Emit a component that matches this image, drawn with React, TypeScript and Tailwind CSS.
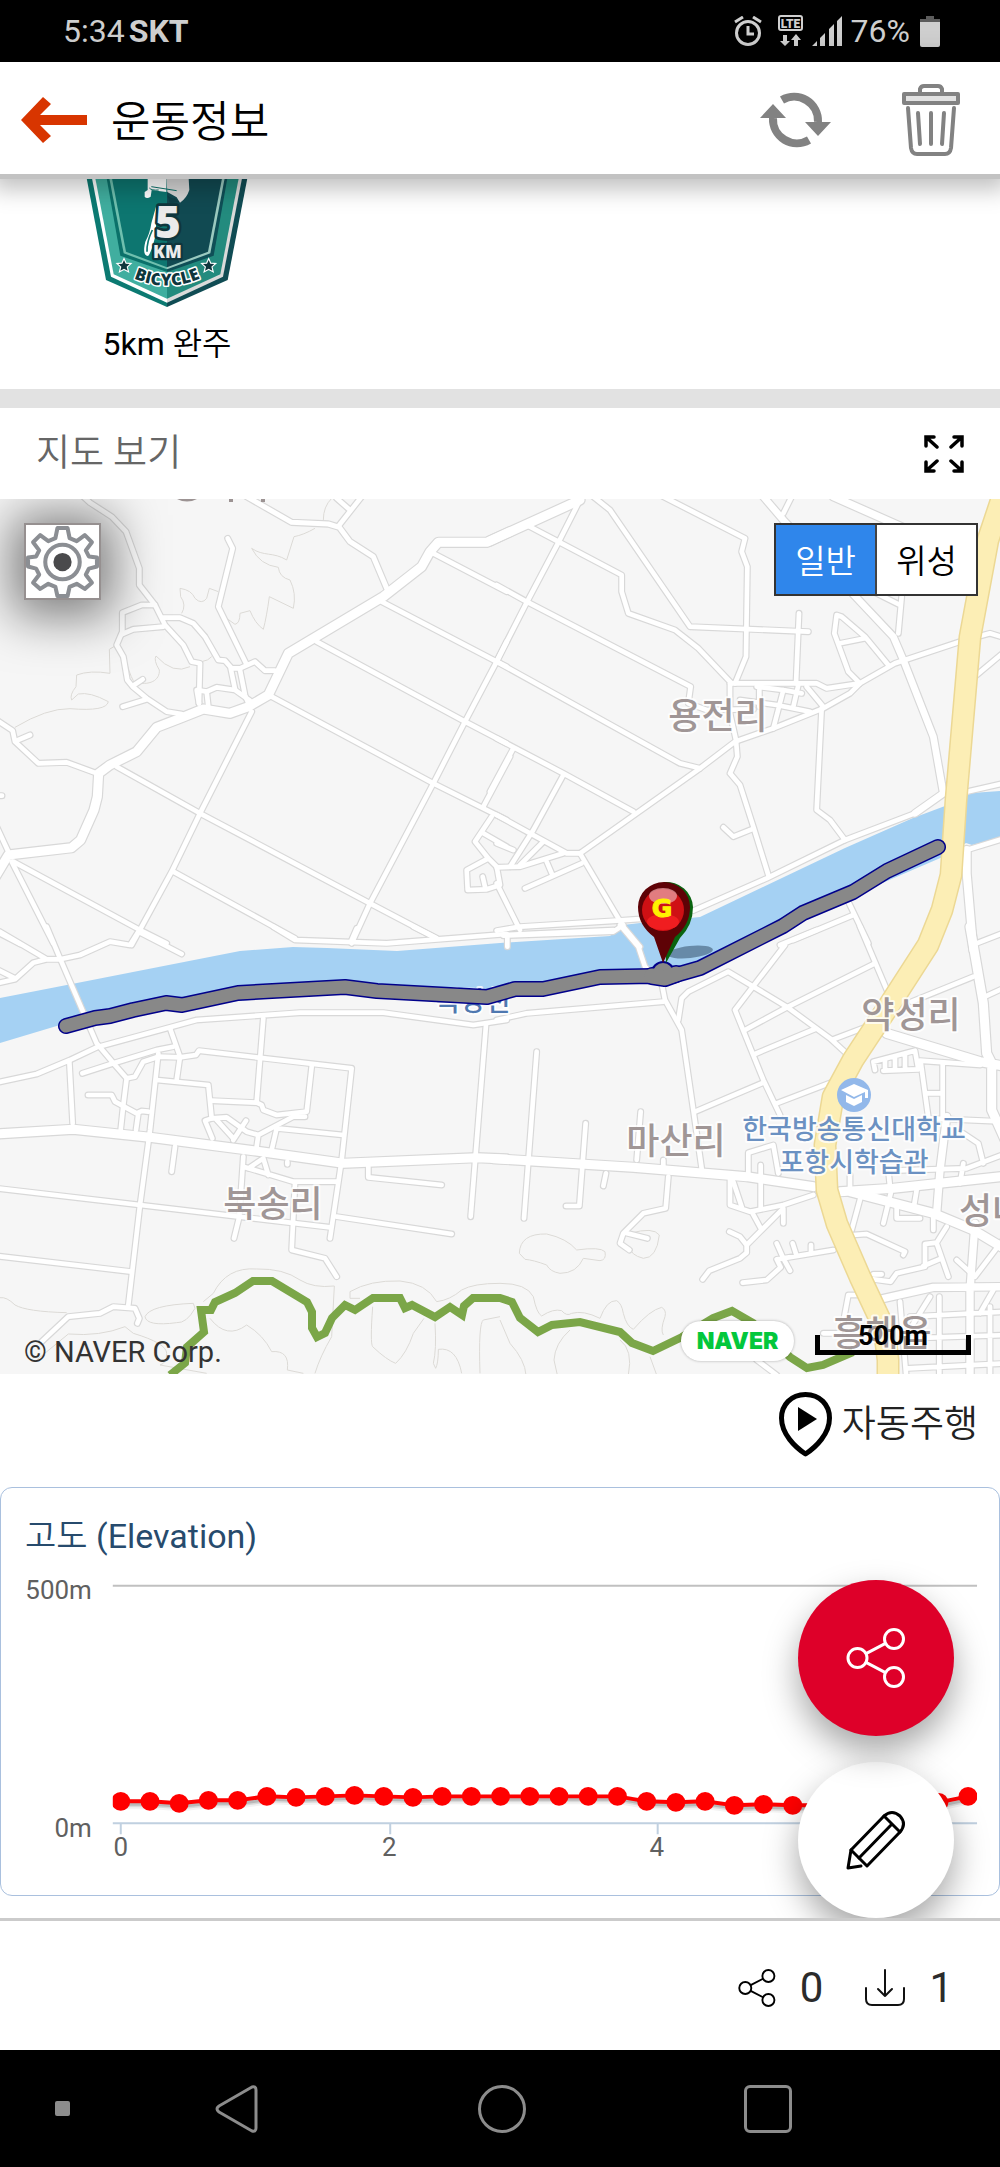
import React from "react";

type Road = { d: string; w?: number };
type Tile = { x: number; y: number; roads: Road[]; trails: string[] };

/* Map tiles: each tile has its own origin and is drawn in thirds of a map unit. */
const tiles: Tile[] = [
  {
    x: 0,
    y: 490,
    roads: [
      { w: 27, d: "M-20 1170 L25 1095 L215 1073 L242 1050 L282 960 L292 920 L296 850 L330 825 L410 785 L470 712 L540 685 L610 657 L690 670 L745 650 L805 615 L865 490 L1150 320 L1265 230 L1290 185 L1315 157 L1460 157 L1530 125" },
      { d: "M250 20 L270 38 L335 80 L378 125 L418 235 V285 L465 345 L495 405 L550 465 L575 515 L600 520 L598 600 L597 640" },
      { d: "M465 345 H425 L367 368 V425 L350 465 L370 500 L382 570 L398 590 L440 625 L500 665 L545 672" },
      { d: "M367 432 L400 418 L490 410" },
      { d: "M490 383 H540 L580 400 L615 440 L655 510 L675 512 L695 535 H720 L765 515 L795 542 H825" },
      { d: "M683 145 L698 175 L655 350 L738 520" },
      { d: "M692 535 L705 598 M720 540 L735 615 L745 640" },
      { d: "M597 640 L590 600 L620 605 L650 592 L705 600 L750 632 M620 605 L625 650" },
      { d: "M398 588 L428 568 M368 650 L440 628" },
      { d: "M-10 690 L38 722 L45 755 L115 820 L200 817 L290 850" },
      { d: "M50 752 L90 735 M-10 917 H6" },
      { d: "M-10 1010 L25 1085" },
      { d: "M740 20 L875 97 L985 102 L1018 112 L1050 155 L1120 200 L1160 295", w: 15 },
      { d: "M1018 105 L1085 20 M1010 25 L1050 60" },
      { d: "M1300 190 L1520 305" },
      { d: "M1145 335 L1490 515 L1520 530" },
      { d: "M950 455 L1395 695 L1520 760" },
      { d: "M815 620 L1300 880 L1520 990" },
      { d: "M350 830 L600 970 L1110 1240 L1310 1345" },
      { d: "M520 1145 L885 1345" },
      { d: "M40 1115 L420 1320 L500 1360" },
      { d: "M35 1115 L160 1360" },
      { d: "M755 665 L600 970 L515 1145 L395 1365" },
      { d: "M1520 455 L1490 515 L1395 695 L1300 880 L1110 1240 L1055 1360" },
      { d: "M1530 800 L1450 950" },
      { d: "M1475 980 L1425 1055 L1465 1105 L1400 1140 L1403 1200 L1460 1198 L1500 1185 L1490 1130 L1460 1100 M1450 1030 L1520 1070 M1448 1160 L1455 1190" },
      { d: "M-10 1325 L60 1362" },
    ],
    trails: [
      "M755 175 Q780 225 835 232 Q838 262 870 270 Q890 310 880 355 L808 320 Q800 380 790 418 Q765 400 750 362 L720 370 Q720 400 705 403 L680 385",
      "M755 175 C790 200 820 185 860 210 L882 140 Q910 135 945 115",
      "M545 370 Q560 345 542 320 L540 295 Q575 300 585 325 Q605 345 620 325 L628 295 L655 305",
      "M45 712 Q140 655 210 656 Q320 665 325 635 Q270 605 235 612 L215 630 Q208 615 228 590 L230 555 Q270 540 330 550 L328 478 L345 468",
      "M400 575 C450 590 480 570 478 540 Q460 510 468 498 Q520 555 570 530",
      "M605 515 Q625 512 635 500",
      "M970 90 Q970 50 995 25",
      "M380 520 Q395 570 405 578",
    ],
  },
  {
    x: 500,
    y: 490,
    roads: [
      { w: 27, d: "M-30 153 L240 30" },
      { w: 20, d: "M790 20 L850 90 L1180 440 L1210 510 L1300 740 L1330 910 L1245 970" },
      { w: 22, d: "M1000 20 L1215 115" },
      { w: 24, d: "M1400 1080 V1150 L1420 1380" },
      { d: "M240 30 L175 158 L80 338 L-12 518" },
      { d: "M280 20 L330 60 L570 410 L925 425" },
      { d: "M80 105 L175 155 L365 255 L365 305 L385 370 L525 420 L595 475 L695 580" },
      { d: "M490 20 L735 145 L725 185 L742 230 L738 500 L705 580" },
      { d: "M897 370 L888 580" },
      { d: "M-10 285 L80 335 L572 590 L565 640 L620 660 L760 658" },
      { d: "M-10 515 L540 820 L600 835" },
      { d: "M-10 745 L190 850 L400 965" },
      { d: "M-10 975 L90 1030 L200 1090 L240 1090" },
      { d: "M690 580 L950 580 L980 595 L1080 580 L1185 520 L1380 455" },
      { d: "M690 580 V670 L708 750 L712 800 L690 850 L720 885 L760 1010 L805 1155" },
      { d: "M240 1090 L600 835 L705 755 L820 715 L970 655 L1050 610 L1080 580" },
      { d: "M1080 580 L1045 545 L1003 430 L1010 375 L1025 380 L1095 440 L1165 525 M1020 460 L1095 445" },
      { d: "M770 590 L850 600 L905 610 M778 590 V650 M720 630 L830 645 L930 665 M850 600 L820 715 M895 585 L880 650 M920 590 L970 650" },
      { d: "M965 655 L950 960 L990 990 L1035 1050" },
      { d: "M670 1012 L700 1040 L755 1018" },
      { d: "M850 70 L875 20 M1195 430 L1205 320 M1100 295 L1200 345" },
      { d: "M1440 438 L1470 430 L1520 445 M1520 480 L1430 555 M1430 145 H1470" },
      { d: "M580 1262 L800 1165 L1035 1050 L1250 968" },
      { d: "M-10 1322 L60 1310 L350 1292 L420 1287 M10 1337 L340 1325 L370 1305" },
      { d: "M240 1090 L370 1310 L420 1370" },
      { d: "M40 775 L-30 905 M190 855 L100 1020 L30 1130 M130 1055 L60 1125" },
      { d: "M-10 1132 L60 1130 L190 1090 M-10 1060 L40 1080" },
      { d: "M75 1195 L245 1120 M140 1115 L155 1150 M-10 1180 L60 1320" },
      { d: "M1400 905 L1510 880 M1400 1080 L1520 1043" },
      { d: "M1045 1235 L1105 1360 M880 1350 L1060 1275" },
    ],
    trails: [],
  },
  {
    x: 0,
    y: 930,
    roads: [
      { w: 27, d: "M-10 612 L220 598 L450 622 L760 662 L1030 700 L1430 683 L1520 687" },
      { d: "M-10 458 L110 432 L210 390 L290 352 L510 292 L590 270 L900 248 L1150 248 L1420 285 L1520 270" },
      { d: "M140 -10 L180 85 L290 340 L345 405 L380 445 L370 525 L362 600" },
      { d: "M0 5 L140 88 H180 L240 75 L330 35 L390 45 L415 5 L545 72 M140 88 L100 98 L45 148 L-10 160 M-10 118 L45 145" },
      { d: "M820 -10 L885 30 L1160 40 L1520 12 M1070 -5 L1055 30 M1240 -10 L1310 25" },
      { d: "M247 430 L340 400 L470 360 L520 350" },
      { d: "M510 295 L540 380 L530 450" },
      { d: "M380 445 L405 440 L430 395 L475 380 L540 382 L588 375 L597 362 L1055 415 L1025 690 L990 925" },
      { d: "M790 265 L770 515 M935 410 L920 545 L830 555 L790 540 L785 525 L770 518 L635 512" },
      { d: "M475 370 L450 600 L420 825 L385 1125" },
      { d: "M470 450 L625 465 L635 565 L615 572 L637 625" },
      { d: "M635 565 L680 562 L740 605 L775 615 L880 560 L915 560 M738 572 L700 630 M775 615 L770 650 M650 570 L700 625" },
      { d: "M830 595 L815 660 M830 595 L1030 615" },
      { d: "M264 495 H335 L345 515 L410 550 L425 543 L445 545 M415 550 L408 600" },
      { d: "M208 395 L218 580" },
      { d: "M525 650 L515 725 M730 680 L718 860 L702 925 M730 710 L880 755 H1010 M745 715 L790 685 L805 735 M862 695 V703" },
      { d: "M1105 710 V742 L1325 765" },
      { d: "M-10 775 L420 825 L700 858 L990 892 M1010 860 L1355 912" },
      { d: "M885 760 L875 960 L975 985 L1010 1040" },
      { d: "M-10 978 L395 1025" },
      { d: "M1458 285 L1412 860" },
      { d: "M125 1235 L205 1160 L300 1150 L340 1130 L405 1135 L418 1165 L412 1180" },
    ],
    trails: [
      "M435 1160 Q450 1125 580 1120 L585 1135 Q560 1180 530 1178 Q440 1190 435 1160",
      "M610 1115 L640 1090 Q680 1010 770 1017 Q850 1015 900 1050 Q940 1075 1003 1068 L995 1220 Q960 1280 945 1330",
      "M1080 1105 L1050 1105 V1085 Q1110 1050 1200 1053 Q1280 1060 1310 1115 Q1350 1110 1385 1080 Q1420 1060 1500 1060",
      "M630 1165 Q680 1230 740 1185 Q790 1215 815 1265 Q870 1260 862 1320 L910 1330",
      "M1118 1130 Q1110 1240 1118 1250 Q1160 1290 1187 1300 Q1220 1270 1240 1210 L1272 1165",
      "M1305 1180 Q1310 1260 1300 1300 L1307 1315 Q1315 1300 1315 1258 Q1370 1250 1385 1330 M1440 1330 Q1435 1180 1450 1170 L1500 1160",
      "M0 1103 Q20 1100 45 1125 Q80 1145 200 1148",
      "M110 1290 L205 1212 Q300 1220 375 1190 L400 1210 Q500 1240 500 1270 Q500 1300 480 1305 L620 1330",
    ],
  },
  {
    x: 500,
    y: 930,
    roads: [
      { w: 27, d: "M-20 686 L400 712 L740 740 L940 770" },
      { w: 27, d: "M1410 -10 L1450 220 L1460 370 L1475 400 V540 L1520 640 M1160 310 L1440 395 L1520 410" },
      { w: 27, d: "M1020 785 L1180 775 L1520 738 M1050 785 L1300 850 L1420 900 L1520 960" },
      { w: 22, d: "M1340 560 L1320 720 L1310 850 M1425 880 L1410 1080 V1340 M1130 1110 L1300 1072 L1520 1070" },
      { d: "M-10 270 L80 250 L490 215" },
      { d: "M360 -15 L415 50 L435 110 L485 160 L495 210 L545 300 L580 540 L605 715" },
      { d: "M10 15 L340 0 M22 15 V50" },
      { d: "M535 270 L545 205 L565 185 L685 125 L860 230 L990 325 L1050 380" },
      { d: "M855 45 L705 240 L790 450 L840 555 M840 45 L950 0" },
      { d: "M735 300 L855 235 L1125 100 M765 372 L945 297 M830 520 L1000 455 M585 545 L785 460" },
      { d: "M1080 -10 L1165 190 M1235 215 L1420 140 M1000 328 L1100 290" },
      { d: "M1430 40 L1520 5 M1455 200 L1520 170" },
      { d: "M110 365 L72 865 M257 580 L238 828 H198 M422 545 L410 690 M490 690 V720 M318 730 L310 768" },
      { d: "M505 740 L497 835 L430 850 L370 910 L360 940 L388 960 M375 908 L442 925" },
      { d: "M690 745 V825 L750 845 L850 825 L940 795 M745 735 V668 L820 645 L835 730 M782 705 V838 M700 755 L725 830" },
      { d: "M755 845 L785 900 L740 945 V968 L720 985 L628 1022 L608 1048 M785 900 L850 835 V880 M688 905 L720 920 L740 945" },
      { d: "M728 1058 L800 1050 L842 1012 L830 988 L1000 960 M830 940 L850 985 L870 1022 M878 940 L890 978 M933 945 V965" },
      { d: "M1060 915 L1100 912 L1215 965 L1210 975 M1085 790 L1055 900" },
      { d: "M1260 392 L1440 405 M1262 395 L1285 562 M1328 400 V560 M1280 490 H1328 M1285 565 L1520 575" },
      { d: "M1050 735 V780 M1165 720 L1172 790 L1150 880 M1250 780 L1240 840 M1170 722 L1400 715 L1520 670 M1390 610 L1435 640 L1450 700 M1390 700 L1380 760 M1190 820 V865 H1260 M1300 850 V900" },
      { d: "M1340 890 L1310 938 L1275 942 V1010 L1190 1030 L1172 1055 L1120 1048 M1310 940 L1345 1040 M1370 990 L1425 1040 L1520 915 M1120 1033 H1145 M1270 1008 L1325 985" },
      { d: "M1200 1115 L1218 1330 M1290 1100 L1228 1200 M1318 1100 V1330 M1230 1160 L1520 1145 M1220 1225 L1520 1215 M1225 1315 L1520 1300 M1480 1080 L1440 1150 M1470 1130 V1330" },
      { d: "M1045 1095 L1030 1175 M1045 1095 H1110 M970 1210 H1020" },
      { d: "M770 1290 L830 1335" },
      { d: "M1125 420 L1120 395 L1245 362 L1255 418 L1150 422 M1155 390 V418 M1185 380 V418 M1215 375 V418" },
    ],
    trails: [
      "M58 970 Q60 910 140 912 Q200 925 230 960 Q300 950 315 965 Q320 990 300 992 L250 985 Q230 1030 180 1030 Q150 1025 140 1005 Q100 990 75 988 Z",
      "M390 910 Q460 890 478 915 Q470 985 430 985 Q390 975 390 950",
      "M0 1060 Q80 1060 100 1100 Q110 1150 125 1158 Q160 1135 185 1142 Q200 1160 215 1150 Q250 1140 300 1165 Q320 1110 350 1112 Q365 1120 370 1150 Q380 1190 400 1198 Q450 1140 485 1132 Q500 1140 495 1160 Q480 1200 490 1215",
      "M0 1170 L30 1240 Q75 1290 78 1335 M210 1200 Q165 1240 162 1290 L172 1335 M360 1230 Q400 1260 385 1335 M450 1280 L470 1335",
    ],
  },
];

const ridge =
  "M170 1375 L185 1363 L187 1347 L204 1332 L201 1310 H211 L215 1302 L235 1293 L253 1281 H272 L307 1302 L312 1312 V1328 L317 1337 L325 1333 L332 1318 L345 1305 L355 1310 L373 1298 H400 L405 1308 L412 1305 L435 1317 L450 1307 L462 1315 L464 1306 L473 1298 H500 L512 1302 L520 1318 L538 1332 L552 1325 L580 1322 L620 1332 L632 1343 L653 1351 L682 1337 L713 1318 L732 1311 L753 1323 L790 1357 L807 1368 L823 1365 L853 1352";

const track =
  "M66 1026 L95 1018 L110 1016 L133 1010 L166 1003 L182 1005 L238 993 L345 987 L377 991 L487 997 L515 989 L543 989 L600 977 L652 976 L665 978 L700 968 L783 926 L803 913 L853 892 L887 871 L938 847";

const highway =
  "M1008 480 L988 540 L970 637 L956 800 L951 875 L942 910 L928 945 L890 1004 L853 1060 L833 1097 L825 1145 L827 1190 L837 1224 L860 1277 L884 1328 L888 1360 V1380";

const mapLabels = [
  { x: 718, y: 729, text: "용전리" },
  { x: 273, y: 1217, text: "북송리" },
  { x: 676, y: 1154, text: "마산리" },
  { x: 911, y: 1028, text: "약성리" },
  { x: 992, y: 1224, text: "성내" },
  { x: 882, y: 1346, text: "흥해읍" },
];

const elevation = [
  314, 314, 316, 313, 313, 309, 310, 309, 308, 309, 310, 309, 309, 309, 309, 309, 309, 309, 314,
  315, 314, 318, 317, 318, 318, 317, 318, 318, 315, 309,
].map((y, i) => ({ x: 120 + (i * 849) / 29, y }));

function RouteMap() {
  return (
    <svg viewBox="0 499 1000 875" className="block w-full" role="img" aria-label="운동 경로 지도">
      <rect x="0" y="499" width="1000" height="875" fill="#f6f6f6" />
      <g fill="none" stroke="#dcdad6" strokeWidth="3">
        {tiles.map((t) => (
          <g key={`${t.x}-${t.y}`} transform={`translate(${t.x} ${t.y}) scale(0.33333)`}>
            {t.trails.map((d) => (
              <path key={d} d={d} />
            ))}
          </g>
        ))}
      </g>
      <path
        fill="#a5d1f3"
        d="M0 998 L77 983 L240 951 L293 947 L327 948 L397 951 L500 943 L610 936 L623 925 L640 923 L700 917 L845 848 L913 818 L945 806 L972 793 L1000 791 V838 L972 845 L966 843 L945 856 L880 884 L800 920 L700 966 L660 980 L500 992 L350 992 L165 1007 L60 1025 L0 1043 Z"
      />
      <g fill="none" strokeLinecap="round" strokeLinejoin="round" stroke="#d8d8d8">
        {tiles.map((t) => (
          <g key={`${t.x}-${t.y}`} transform={`translate(${t.x} ${t.y}) scale(0.33333)`}>
            {t.roads.map((r) => (
              <path key={r.d} d={r.d} strokeWidth={(r.w ?? 14) + 7} />
            ))}
          </g>
        ))}
      </g>
      <g fill="none" strokeLinecap="round" strokeLinejoin="round" stroke="#ffffff">
        {tiles.map((t) => (
          <g key={`${t.x}-${t.y}`} transform={`translate(${t.x} ${t.y}) scale(0.33333)`}>
            {t.roads.map((r) => (
              <path key={r.d} d={r.d} strokeWidth={r.w ?? 14} />
            ))}
          </g>
        ))}
      </g>
      <path d={ridge} fill="none" stroke="#7ba648" strokeWidth="8" />
      <path d={highway} fill="none" stroke="#ecd894" strokeWidth="23" strokeLinejoin="round" />
      <path d={highway} fill="none" stroke="#fceeb5" strokeWidth="20" strokeLinejoin="round" />

      <g fill="#9c9393">
        <path d="M177 499 H197 Q187 504 177 499 Z" />
        <rect x="229" y="499" width="4" height="3" />
        <rect x="261" y="499" width="4" height="3" />
      </g>
      <g
        fontFamily="'Noto Sans CJK KR', sans-serif"
        fontWeight="500"
        textAnchor="middle"
        stroke="#ffffff"
        strokeOpacity="0.8"
        strokeWidth="4"
        strokeLinejoin="round"
        paintOrder="stroke"
      >
        {mapLabels.map((l) => (
          <text key={l.text} x={l.x} y={l.y} fontSize="36" fill="#a09696">
            {l.text}
          </text>
        ))}
        <text x="473" y="1011" fontSize="27" fill="#4f78b0">곡강천</text>
        <text x="854" y="1139" fontSize="27" fill="#6b91c2">한국방송통신대학교</text>
        <text x="854" y="1172" fontSize="27" fill="#6b91c2">포항시학습관</text>
      </g>
      <circle cx="854" cy="1095" r="17" fill="#92b8ea" />
      <path d="M854 1084 L868 1090 V1098 L865 1098 V1092 L854 1097 L841 1090 Z M846 1095 L854 1099 L862 1095 V1102 L854 1106 L846 1102 Z" fill="#ffffff" />

      <ellipse cx="690" cy="952" rx="23" ry="6" fill="#34506a" opacity="0.55" transform="rotate(-6 690 952)" />
      <g fill="none" strokeLinecap="round" strokeLinejoin="round">
        <path d={track} stroke="#00008b" strokeWidth="16" />
        <circle cx="663" cy="973" r="12" fill="#00008b" />
        <path d="M652 976 L665 978 L676 974" stroke="#00008b" strokeWidth="18" />
        <path d={track} stroke="#888888" strokeWidth="13" />
        <circle cx="663" cy="973" r="10" fill="#888888" />
        <path d="M652 976 L665 978 L676 974" stroke="#888888" strokeWidth="15" />
      </g>
      <path d="M666 963 L680 938 Q693 925 693 907 A27 26 0 0 0 664 882 Z" fill="#0a6410" />
      <path d="M663 963 L654 937 Q638 925 638 907 A26 25 0 0 1 690 907 Q690 925 675 937 Z" fill="#5e0206" />
      <circle cx="663" cy="910" r="21" fill="#cf1014" />
      <ellipse cx="663" cy="922" rx="16" ry="8" fill="#f01d20" />
      <ellipse cx="663" cy="896" rx="14" ry="8" fill="#e8a0a4" opacity="0.75" />
      <text
        x="662"
        y="917"
        fontFamily="'DejaVu Sans', sans-serif"
        fontWeight="700"
        fontSize="25"
        textAnchor="middle"
        fill="#fff200"
        stroke="#fff200"
        strokeWidth="1"
      >
        G
      </text>
    </svg>
  );
}

function BadgeArt() {
  return (
    <svg viewBox="18 27 486 384" className="w-full" aria-hidden="true">
      <path d="M20 25 H261 V411 L78 330 Z" fill="#0c7a72" />
      <path d="M502 25 H261 V411 L443 330 Z" fill="#104c54" />
      <path d="M36 25 H261 V398 L93 320 Z" fill="#fff" />
      <path d="M486 25 H261 V398 L429 320 Z" fill="#dadada" />
      <path d="M46 25 H261 V386 L101 313 Z" fill="#40ae9f" />
      <path d="M476 25 H261 V386 L421 313 Z" fill="#238b7e" />
      <path d="M80 25 H261 V306 L121 257 Z" fill="#0b716a" />
      <path d="M442 25 H261 V306 L401 257 Z" fill="#0f4f57" />
      <path d="M88 25 H261 V298 L131 250 Z" fill="#6fbfae" />
      <path d="M434 25 H261 V298 L391 250 Z" fill="#9ac9bf" />
      <path d="M96 25 H261 V292 L138 245 Z" fill="#0d7670" />
      <path d="M426 25 H261 V292 L384 245 Z" fill="#114a52" />
      <path d="M203 25 H259 V66 L230 62 L215 60 L212 80 Q200 88 194 80 L194 66 L203 60 Z" fill="#fff" />
      <path d="M259 25 H326 L328 60 Q320 85 300 98 L290 82 L262 66 Z" fill="#d6d6d6" />
      <path d="M262 76 Q275 88 285 84 L298 96 L270 100 Z" fill="#0f4048" />
      <path d="M214 50 L290 62 M208 54 Q215 62 236 60" fill="none" stroke="#0b716a" strokeWidth="3" />
      <path d="M228 110 L214 160 Q210 190 196 215 Q186 256 204 258 Q214 250 228 190 Z" fill="#fff" />
      <path d="M217 180 Q200 215 201 245" fill="none" stroke="#0d7670" strokeWidth="5" />
      <g fontFamily="'Open Sans', sans-serif" fontWeight="800" textAnchor="middle" strokeLinejoin="round" paintOrder="stroke">
        <text x="264" y="203" fontSize="132" fill="#ebebeb" stroke="#0f363d" strokeWidth="16">5</text>
        <text x="262" y="263" fontSize="52" fill="#ebebeb" stroke="#0f363d" strokeWidth="14">KM</text>
        <path id="ribbon" d="M130 310 Q262 384 392 310" fill="none" />
        <text fontSize="50" fill="#0f363d" stroke="#fff" strokeWidth="9">
          <textPath href="#ribbon" startOffset="50%">BICYCLE</textPath>
        </text>
      </g>
      {[132, 386].map((x) => (
        <path
          key={x}
          transform={`translate(${x} 287)`}
          d="M0 -17 L5 -6 L17 -5 L8 3 L11 15 L0 9 L-11 15 L-8 3 L-17 -5 L-5 -6 Z"
          fill="#0f363d"
          stroke="#fff"
          strokeWidth="7"
          paintOrder="stroke"
        />
      ))}
    </svg>
  );
}

function ShareIcon({ className, stroke }: { className: string; stroke: number }) {
  return (
    <svg viewBox="0 0 60 60" className={className} fill="none" stroke="currentColor" strokeWidth={stroke} aria-hidden="true">
      <circle cx="11.500" cy="30" r="9.500" />
      <circle cx="48" cy="11" r="9.500" />
      <circle cx="48" cy="49" r="9.500" />
      <path d="M20 25.600 L39.500 15.400 M20 34.400 L39.500 44.600" />
    </svg>
  );
}

function StatusBar() {
  return (
    <div className="flex h-[62px] items-center justify-between bg-black pl-[63px] pr-[60px] text-[32px] leading-none text-[#cfcfcf]">
      <div className="flex gap-1">
        <span>5:34</span>
        <span className="font-bold">SKT</span>
      </div>
      <div className="flex items-center">
        <svg viewBox="0 0 28 30" className="mr-4 h-[30px] w-7" fill="none" stroke="currentColor" strokeWidth="3" aria-hidden="true">
          <circle cx="14" cy="17" r="11.500" />
          <path d="M14 10 V18 H20 M1 6 L9 1 M27 6 L19 1" />
        </svg>
        <svg viewBox="0 0 26 32" className="mr-2 h-8 w-[26px]" aria-hidden="true">
          <rect x="1" y="1" width="23" height="14" rx="2" fill="none" stroke="currentColor" strokeWidth="2" />
          <text x="12.500" y="12.500" fontSize="12" fontWeight="900" textAnchor="middle" fill="currentColor">LTE</text>
          <path d="M5 20 H9 V26 H12 L7 31 L2 26 H5 Z M16 31 H20 V25 H23 L18 19 L13 25 H16 Z" fill="currentColor" />
        </svg>
        <svg viewBox="0 0 31 30" className="mr-2 h-[30px] w-[31px]" fill="currentColor" aria-hidden="true">
          <path d="M0 30 L5 25 V30 Z M8 30 V22 L13 17 V30 Z M17 30 V13 L22 8 V30 Z M25 30 V5 L30 0 V30 Z" />
        </svg>
        <span>76%</span>
        <svg viewBox="0 0 20 31" className="ml-2.5 h-[31px] w-5" aria-hidden="true">
          <path d="M6 0 H14 V3 H20 V7 H0 V3 H6 Z" fill="#5c5c5c" />
          <path d="M0 6 H20 V29 Q20 31 18 31 H2 Q0 31 0 29 Z" fill="currentColor" />
        </svg>
      </div>
    </div>
  );
}

function Header() {
  return (
    <header className="relative z-20 flex h-[117px] items-center border-b-[5px] border-[#c2c2c2] bg-white pl-[21px] pr-10 pt-1 shadow-[0_2px_22px_8px_rgba(0,0,0,0.25)]">
      <button type="button" aria-label="뒤로">
        <svg viewBox="0 0 66 46" className="h-[46px] w-[66px]" aria-hidden="true">
          <path d="M0 23 L22 0 L30 7 L19 18 H66 V28 H19 L30 39 L22 46 Z" fill="#d83500" />
        </svg>
      </button>
      <h1 className="ml-6 flex-1 pt-1 text-[43px] font-[350] leading-none text-black">운동정보</h1>
      <button type="button" aria-label="새로고침">
        <svg viewBox="0 0 71 56" className="h-14 w-[71px]" fill="none" stroke="#828282" strokeWidth="8" aria-hidden="true">
          <path d="M22 8 A24 24 0 0 1 58 30" />
          <path d="M13 26 A24 24 0 0 0 49 48" />
          <path d="M45 30 H71 L58 44 Z M0 26 H26 L13 12 Z" fill="#828282" stroke="none" />
        </svg>
      </button>
      <button type="button" aria-label="삭제" className="ml-[71px]">
        <svg viewBox="0 0 58 72" className="h-[72px] w-[58px]" fill="none" stroke="#828282" strokeWidth="4" strokeLinecap="round" strokeLinejoin="round" aria-hidden="true">
          <path d="M18 8 V5 Q19 2 22 2 H36 Q39 2 40 5 V8" />
          <rect x="2" y="10" width="54" height="9" fill="#e2e2e2" />
          <path d="M6 24 L9 64 Q10 70 15 70 H43 Q48 70 49 64 L52 24" />
          <path d="M16 29 L18 60 M29 29 V60 M42 29 L40 60" />
        </svg>
      </button>
    </header>
  );
}

function ElevationChart() {
  return (
    <section className="relative h-[409px] rounded-xl border border-[#a9c0de] bg-white">
      <h2 className="absolute left-6 top-7 text-[34px] leading-10 text-[#274b6d]">
        <span className="font-[350]">고도</span> (Elevation)
      </h2>
      <svg viewBox="0 0 1000 409" className="block w-full" role="img" aria-label="고도 그래프">
        <g fill="#606060" fontSize="26">
          <g textAnchor="end">
            <text x="91" y="111">500m</text>
            <text x="91" y="350">0m</text>
          </g>
          <g textAnchor="middle">
            <text x="120" y="369">0</text>
            <text x="389" y="369">2</text>
            <text x="657" y="369">4</text>
          </g>
        </g>
        <path d="M112 98 H978" stroke="#c0c0c0" strokeWidth="2" />
        <path d="M112 336 H978 M120 336 V347 M390 336 V347 M658 336 V347" stroke="#c0d0e0" strokeWidth="2" fill="none" />
        <clipPath id="plot">
          <rect x="112" y="98" width="866" height="240" />
        </clipPath>
        <g clipPath="url(#plot)">
          {[
            { w: 10, o: 0.05 },
            { w: 6, o: 0.1 },
            { w: 3, o: 0.15 },
          ].map((s) => (
            <polyline
              key={s.w}
              points={elevation.map((p) => `${p.x + 2},${p.y + 3}`).join(" ")}
              fill="none"
              stroke="#000"
              strokeOpacity={s.o}
              strokeWidth={s.w}
            />
          ))}
          <polyline points={elevation.map((p) => `${p.x},${p.y}`).join(" ")} fill="none" stroke="#f00" strokeWidth="4" />
          {elevation.map((p) => (
            <circle key={p.x} cx={p.x} cy={p.y} r="9.500" fill="#f00" />
          ))}
        </g>
      </svg>
    </section>
  );
}

export default function App() {
  return (
    <div className="w-full bg-white font-['Roboto','Noto_Sans_CJK_KR',sans-serif]">
      <StatusBar />
      <Header />
      <main className="relative overflow-hidden pb-[22px]">
        <section className="pb-[25px] pl-[86px]">
          <figure className="w-[162px]">
            <BadgeArt />
            <figcaption className="mt-[17px] text-center text-[32px] leading-10 text-black">
              5km <span className="font-[350]">완주</span>
            </figcaption>
          </figure>
        </section>

        <div className="h-[19px] bg-[#e2e2e2]" />

        <section className="flex h-[91px] items-center justify-between px-9">
          <h2 className="text-[37px] font-[350] leading-none text-[#666]">지도 보기</h2>
          <button type="button" aria-label="전체 화면">
            <svg viewBox="0 0 40 38" className="h-[38px] w-10" fill="none" stroke="#000" strokeWidth="3.500" strokeLinecap="round" aria-hidden="true">
              <path d="M13 12 L2 2 M2 11 V2 H10 M27 12 L38 2 M38 11 V2 H30 M13 26 L2 36 M2 27 V36 H10 M27 26 L38 36 M38 27 V36 H30" />
            </svg>
          </button>
        </section>

        <section className="relative overflow-hidden">
          <RouteMap />
          <button
            type="button"
            aria-label="지도 설정"
            className="absolute left-6 top-6 h-[77px] w-[77px] border-2 border-[#969090] bg-white shadow-[0_4px_50px_12px_rgba(0,0,0,0.5)]"
          >
            <svg viewBox="0 0 72 72" className="h-full w-full" fill="none" stroke="#8b8e93" strokeWidth="4" strokeLinejoin="round" aria-hidden="true">
              <path d="M31 3 H41 L43 13 L50 16 L58 10 L65 17 L59 25 L62 31 L70 32 V41 L62 43 L59 49 L65 57 L58 63 L50 58 L43 61 L41 70 H31 L29 61 L22 58 L14 63 L7 57 L13 49 L10 43 L2 41 V32 L10 31 L13 25 L7 17 L14 10 L22 16 L29 13 Z" />
              <circle cx="36" cy="36.500" r="17" />
              <circle cx="36" cy="36.500" r="9" fill="#4a4a4c" stroke="none" />
            </svg>
          </button>
          <div className="absolute right-[22px] top-6 flex h-[73px] w-[204px] divide-x-2 divide-[#444] border-2 border-[#333] bg-white text-[33px] leading-none">
            <button type="button" aria-pressed="true" className="flex-1 bg-[#2f86eb] pt-1 font-[350] text-white">일반</button>
            <button type="button" aria-pressed="false" className="flex-1 pt-1 font-[350] text-black">위성</button>
          </div>
          <span className="absolute bottom-1.5 left-6 text-[29px] leading-8 text-[#333]">© NAVER Corp.</span>
          <span className="absolute bottom-[13px] right-[206px] flex h-10 w-[113px] items-center justify-center rounded-full bg-white font-['Inter',sans-serif] text-[23px] font-black text-[#03c73c] shadow-[0_0_3px_rgba(0,0,0,0.3)]">
            NAVER
          </span>
          <div className="absolute bottom-[19px] right-[29px] h-5 w-[156px] border-x-[5px] border-b-[5px] border-black">
            <span className="absolute inset-x-0 bottom-0 text-center text-[27px] font-bold leading-7 text-black">500m</span>
          </div>
        </section>

        <section className="flex h-[113px] items-center justify-end pr-[22px]">
          <button type="button" className="flex items-center gap-2.5 pb-3 text-[37px] font-[350] leading-none text-[#222]">
            <svg viewBox="0 0 53 65" className="h-[65px] w-[53px]" aria-hidden="true">
              <path d="M26.500 2.500 C12 2.500 2.500 13 2.500 26 C2.500 42 16 55 26.500 62 C37 55 50.500 42 50.500 26 C50.500 13 41 2.500 26.500 2.500 Z" fill="none" stroke="#000" strokeWidth="5" strokeLinejoin="round" />
              <path d="M19 15 V39 L38 27 Z" fill="#000" />
            </svg>
            자동주행
          </button>
        </section>

        <ElevationChart />

        <div className="absolute bottom-0 right-[46px] flex flex-col gap-[26px]">
          <button
            type="button"
            aria-label="공유"
            className="relative z-10 flex h-[156px] w-[156px] items-center justify-center rounded-full bg-[#de0029] text-white shadow-[0_16px_34px_rgba(0,0,0,0.35)]"
          >
            <ShareIcon className="h-[60px] w-[60px]" stroke={3} />
          </button>
          <button
            type="button"
            aria-label="편집"
            className="flex h-[156px] w-[156px] items-center justify-center rounded-full bg-white shadow-[0_16px_34px_rgba(0,0,0,0.35)]"
          >
            <svg viewBox="0 0 60 60" className="h-[60px] w-[60px]" fill="none" stroke="#000" strokeWidth="3" strokeLinejoin="round" strokeLinecap="round" aria-hidden="true">
              <path d="M5 40 L38 6 Q46 -1 54 6 Q61 14 54 22 L21 56 Z" />
              <path d="M38 6 L54 22 M13 48 L46 14 M5 40 L2 58 L15 56" />
            </svg>
          </button>
        </div>
      </main>

      <footer className="relative flex h-[132px] items-center justify-end border-t-[3px] border-[#cbcbcb] bg-white pr-[47px] pt-1 text-[42px] leading-none text-[#2b2b2b]">
        <div className="flex items-center gap-6">
          <ShareIcon className="h-[38px] w-[38px] text-black" stroke={3} />
          <span>0</span>
        </div>
        <div className="ml-[42px] flex items-center gap-6">
          <svg viewBox="0 0 40 38" className="h-[38px] w-10" fill="none" stroke="#111" strokeWidth="2" strokeLinecap="round" strokeLinejoin="round" aria-hidden="true">
            <path d="M20 1 V27 M13 20 L20 27 L27 20 M1 19 V30 Q1 36 7 36 H33 Q39 36 39 30 V19" />
          </svg>
          <span>1</span>
        </div>
      </footer>

      <nav className="flex h-[117px] items-center bg-black pl-[55px] text-[#8c8c8c]" aria-label="시스템 탐색">
        <button type="button" aria-label="숨기기" className="h-[15px] w-[15px] rounded-xs bg-current" />
        <button type="button" aria-label="이전" className="ml-[145px]">
          <svg viewBox="0 0 43 48" className="h-12 w-[43px]" fill="none" stroke="currentColor" strokeWidth="3" strokeLinejoin="round" aria-hidden="true">
            <path d="M37 2 Q41 1 41 5 V43 Q41 47 37 46 L4 27 Q0 24 4 21 Z" />
          </svg>
        </button>
        <button type="button" aria-label="홈" className="ml-[220px] h-12 w-12 rounded-full border-3 border-current" />
        <button type="button" aria-label="최근 앱" className="ml-[218px] h-12 w-12 rounded-md border-3 border-current" />
      </nav>
    </div>
  );
}
